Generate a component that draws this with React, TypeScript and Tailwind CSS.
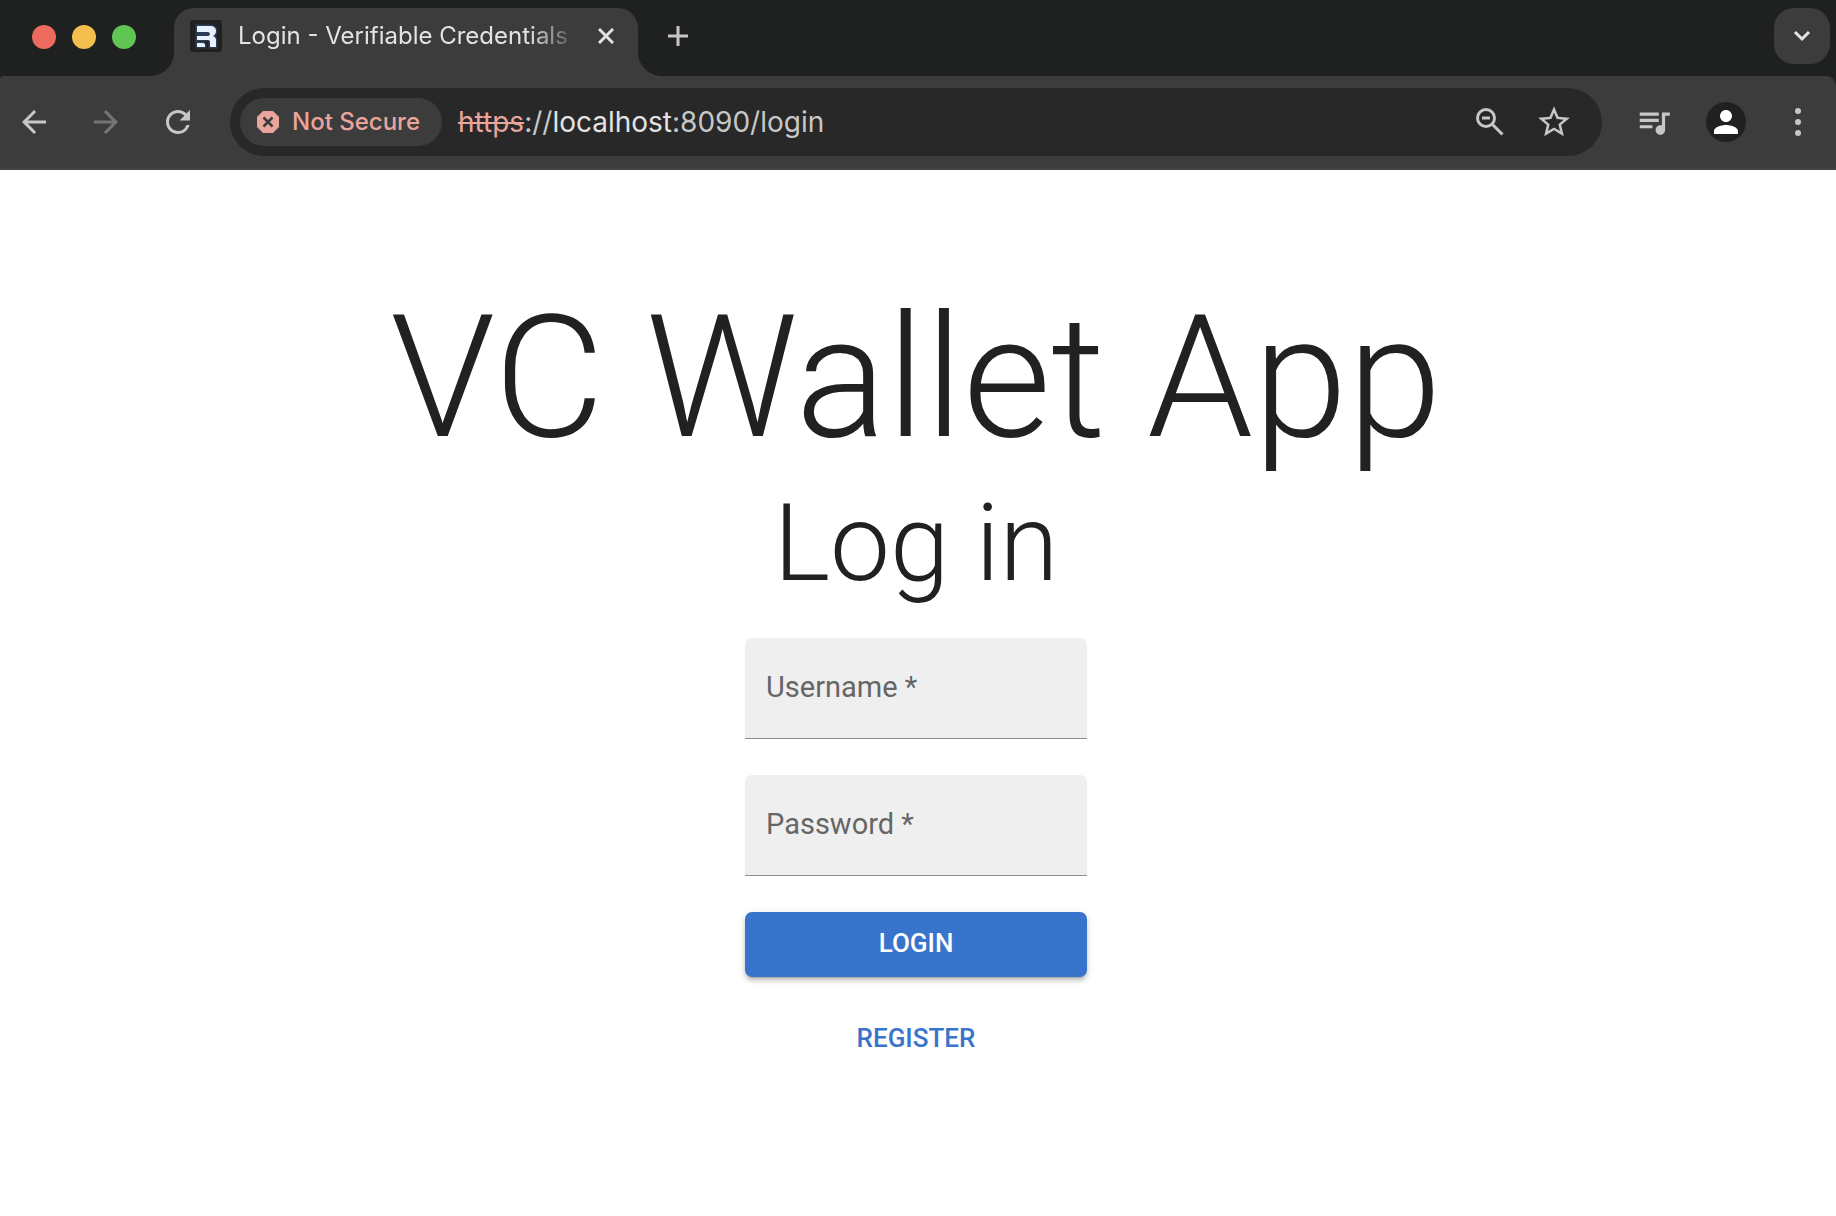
import { useState } from "react";
import type { ReactNode } from "react";
import {
  MdArrowBack,
  MdArrowForward,
  MdRefresh,
  MdStarBorder,
  MdQueueMusic,
  MdPerson,
} from "react-icons/md";

function TrafficLights() {
  return (
    <div className="flex w-[150px] shrink-0 items-center gap-4 pt-[25px] pl-8">
      <button aria-label="Close window" className="size-6 rounded-full bg-[#ed6a5e]" />
      <button aria-label="Minimize window" className="size-6 rounded-full bg-[#f4bf4f]" />
      <button aria-label="Zoom window" className="size-6 rounded-full bg-[#61c554]" />
    </div>
  );
}

function Favicon() {
  return (
    <svg viewBox="0 0 32 32" className="size-8 shrink-0" aria-hidden="true">
      <rect width="32" height="32" rx="3" fill="#212121" />
      <g stroke="#3b6fb5" strokeOpacity="0.35" strokeWidth="3" fill="none">
        <path d="M7 6h13c4 0 6 2 6 5 0 2-1 4-3 5 2 1 3 2 3 4v7h-6v-5c0-2-1-2-3-2H7v-4h11c2 0 2-3 0-3H7zM7 23h6c1 0 2 1 2 2v2H7z" />
      </g>
      <path
        fill="#e8f2ff"
        d="M7 6h13c4 0 6 2 6 5 0 2-1 4-3 5 2 1 3 2 3 4v7h-6v-5c0-1.500-1-2-3-2H7v-4h11c2.500 0 2.500-4 0-4H7zM7 23h6c1 0 2 1 2 2v2H7z"
      />
    </svg>
  );
}

function TabFlare({ flip }: { flip?: boolean }) {
  return (
    <svg
      viewBox="0 0 24 24"
      aria-hidden="true"
      className={flip ? "size-6 shrink-0 self-end -scale-x-100" : "size-6 shrink-0 self-end"}
    >
      <path d="M24 0v24H0C13.300 24 24 13.300 24 0z" fill="#3c3c3c" />
    </svg>
  );
}

function TabStrip() {
  return (
    <div className="flex h-[76px] items-start">
      <TrafficLights />
      <div className="flex h-full items-stretch">
        <TabFlare />
        <div className="mt-2 flex w-[464px] items-start rounded-t-[20px] bg-[#3c3c3c] pt-3 pl-4">
          <Favicon />
          <span className="ml-4 h-8 w-[342px] overflow-hidden mask-r-from-85% mask-r-to-100% text-2xl whitespace-nowrap text-[#e3e3e3]">
            Login - Verifiable Credentials
          </span>
          <button aria-label="Close tab" className="ml-[10px] flex size-8 items-center justify-center text-[#e3e3e3]">
            <svg viewBox="0 0 16 16" className="size-4" stroke="currentColor" strokeWidth="3">
              <path d="M1 1l14 14M15 1L1 15" />
            </svg>
          </button>
        </div>
        <TabFlare flip />
      </div>
      <button aria-label="New tab" className="mt-5 flex size-8 items-center justify-center text-[#c7c7c7]">
        <svg viewBox="0 0 20 20" className="size-5" stroke="currentColor" strokeWidth="3">
          <path d="M10 0v20M0 10h20" />
        </svg>
      </button>
      <button
        aria-label="Search tabs"
        className="mt-2 mr-[6px] ml-auto flex size-14 items-center justify-center rounded-[20px] bg-[#3c3c3c] text-[#e3e3e3]"
      >
        <svg viewBox="0 0 18 12" className="h-3 w-[18px]" fill="none" stroke="currentColor" strokeWidth="3">
          <path d="M2 2l7 7 7-7" />
        </svg>
      </button>
    </div>
  );
}

function ToolButton({ label, dim, children }: { label: string; dim?: boolean; children: ReactNode }) {
  return (
    <button
      aria-label={label}
      disabled={dim}
      className={
        dim
          ? "flex size-9 shrink-0 items-center justify-center text-[#757575]"
          : "flex size-9 shrink-0 items-center justify-center text-[#c7c7c7]"
      }
    >
      {children}
    </button>
  );
}

function AddressBar() {
  return (
    <div className="ml-[34px] flex h-[68px] grow items-center rounded-full bg-[#282828] pr-[30px] pl-[10px]">
      <button className="flex h-12 w-[202px] shrink-0 items-center gap-3 rounded-full bg-[#3c3c3c] pl-4 text-2xl font-medium text-[#e9a49b]">
        <svg viewBox="0 0 24 24" className="size-6 shrink-0" aria-hidden="true">
          <path d="M7 1h10l6 6v10l-6 6H7l-6-6V7z" fill="#e9a49b" />
          <path d="M7.500 7.500l9 9M16.500 7.500l-9 9" stroke="#3c3c3c" strokeWidth="2.500" />
        </svg>
        Not Secure
      </button>
      <div className="ml-4 grow text-[28px] leading-9 whitespace-nowrap text-[#c7c7c7]">
        <span className="text-[#e9a49b] line-through">https</span>
        ://<span className="text-[#e3e3e3]">localhost</span>:8090/login
      </div>
      <div className="flex items-center gap-7">
        <ToolButton label="Zoom level">
          <svg viewBox="0 0 36 36" className="size-9" fill="none" stroke="currentColor">
            <circle cx="14" cy="14" r="8.500" strokeWidth="3" />
            <path d="M20 20l10.500 10.500" strokeWidth="3" />
            <path d="M10 14h8" strokeWidth="3" />
          </svg>
        </ToolButton>
        <ToolButton label="Bookmark this page">
          <MdStarBorder className="size-[38px] shrink-0" />
        </ToolButton>
      </div>
    </div>
  );
}

function Toolbar() {
  return (
    <div className="flex h-[94px] items-center rounded-tl-[4px] rounded-tr-[10px] border-b-2 border-[#434143] bg-[#3c3c3c] pr-5 pl-4">
      <div className="flex items-center gap-9">
        <ToolButton label="Back">
          <MdArrowBack className="size-9" />
        </ToolButton>
        <ToolButton label="Forward" dim>
          <MdArrowForward className="size-9" />
        </ToolButton>
        <ToolButton label="Reload">
          <MdRefresh className="size-9" />
        </ToolButton>
      </div>
      <AddressBar />
      <div className="ml-[34px] flex items-center gap-[34px]">
        <ToolButton label="Media controls">
          <MdQueueMusic className="size-[38px] shrink-0" />
        </ToolButton>
        <button
          aria-label="Profile"
          className="flex size-10 items-center justify-center rounded-full bg-[#1f2120] text-white"
        >
          <MdPerson className="size-9" />
        </button>
        <ToolButton label="Menu">
          <svg viewBox="0 0 36 36" className="size-9" fill="currentColor">
            <circle cx="18" cy="7" r="3" />
            <circle cx="18" cy="18" r="3" />
            <circle cx="18" cy="29" r="3" />
          </svg>
        </ToolButton>
      </div>
    </div>
  );
}

function Field({ id, label, type }: { id: string; label: string; type: string }) {
  const [value, setValue] = useState("");
  return (
    <div className="relative">
      <input
        id={id}
        type={type}
        value={value}
        onChange={(e) => setValue(e.target.value)}
        className="h-[101px] w-full rounded-t-[7px] border-b border-[#8f8f8f] bg-[#efefef] px-[22px] text-[29px] text-[#212121] outline-none"
      />
      <label
        htmlFor={id}
        className={
          value
            ? "pointer-events-none absolute top-2 left-[21px] text-xl text-[#666666]"
            : "pointer-events-none absolute top-[29px] left-[21px] text-[29px] leading-[41px] text-[#666666]"
        }
      >
        {label}
      </label>
    </div>
  );
}

export default function App() {
  return (
    <div className="min-h-screen bg-white">
      <header className="bg-[#1f2120] font-['Inter',sans-serif]">
        <TabStrip />
        <Toolbar />
      </header>
      <main className="flex flex-col items-center pt-[107px] pr-1 font-['Roboto',sans-serif] text-[#212121]">
        <h1 className="text-[170px] leading-[202px] font-light">VC Wallet App</h1>
        <h2 className="text-[107px] leading-[130px] font-light">Log in</h2>
        <form className="mt-[29px] flex w-[342px] flex-col" onSubmit={(e) => e.preventDefault()}>
          <div className="flex flex-col gap-9">
            <Field id="username" label="Username *" type="text" />
            <Field id="password" label="Password *" type="password" />
            <button
              type="submit"
              className="h-[65px] rounded-[7px] bg-[#3874cb] pb-[2px] text-[26px] font-medium text-white shadow-[0_5px_2px_-4px_rgba(0,0,0,0.2),0_4px_4px_0_rgba(0,0,0,0.14),0_2px_9px_0_rgba(0,0,0,0.12)]"
            >
              LOGIN
            </button>
          </div>
          <a href="#register" className="mt-[29px] flex h-[65px] items-center justify-center text-[26px] font-medium text-[#3874cb]">
            REGISTER
          </a>
        </form>
      </main>
    </div>
  );
}
